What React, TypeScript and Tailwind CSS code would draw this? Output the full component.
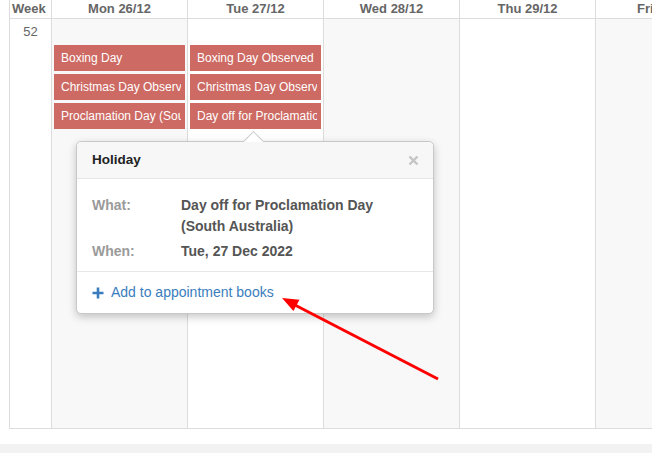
import React from 'react';

type Day = {
  label: string;
  shaded: boolean;
  events: string[];
};

const DAYS: Day[] = [
  {
    label: 'Mon 26/12',
    shaded: true,
    events: ['Boxing Day', 'Christmas Day Observed', 'Proclamation Day (South Australia)'],
  },
  {
    label: 'Tue 27/12',
    shaded: false,
    events: ['Boxing Day Observed (Day after)', 'Christmas Day Observed', 'Day off for Proclamation Day (South Australia)'],
  },
  { label: 'Wed 28/12', shaded: true, events: [] },
  { label: 'Thu 29/12', shaded: false, events: [] },
  { label: 'Fri 30/12', shaded: true, events: [] },
];

function HolidayPopover() {
  return (
    <div className="absolute left-[76px] top-[141px] w-[358px] rounded-[5px] border border-[#c8c8c8] bg-white shadow-[0_3px_9px_rgba(0,0,0,0.22)]">
      {/* arrow pointing at the event */}
      <div className="absolute left-[169px] top-[-8px] h-[15px] w-[15px] rotate-45 border-l border-t border-[#c8c8c8] bg-white" />

      <div className="relative z-10 flex h-[37px] items-center justify-between rounded-t-[5px] border-b border-[#e6e6e6] bg-[#f7f7f7] pl-[15px] pr-[14px]">
        <span className="mt-[1px] text-[13.5px] font-bold text-[#222]">Holiday</span>
        <svg width="11" height="11" viewBox="0 0 11 11" className="mt-[1px]">
          <path d="M1.5 1.5 L9.5 9.5 M9.5 1.5 L1.5 9.5" stroke="#c4c4c4" strokeWidth="2.4" strokeLinecap="butt" />
        </svg>
      </div>

      <div className="flex flex-col gap-[4px] border-b border-[#e8e8e8] pb-[9px] pl-[15px] pt-[16px] text-[14px] font-bold leading-[21px]">
        <div className="flex">
          <span className="w-[89px] shrink-0 text-[#9a9a9a]">What:</span>
          <span className="text-[#555]">
            Day off for Proclamation Day
            <br />
            (South Australia)
          </span>
        </div>
        <div className="flex">
          <span className="w-[89px] shrink-0 text-[#9a9a9a]">When:</span>
          <span className="text-[#555]">Tue, 27 Dec 2022</span>
        </div>
      </div>

      <div className="flex h-[41px] items-center gap-[7px] pl-[15px] text-[14px] text-[#3a7dbd]">
        <svg width="12" height="12" viewBox="0 0 12 12">
          <path d="M6 0.5 V11.5 M0.5 6 H11.5" stroke="#3a7dbd" strokeWidth="2.6" />
        </svg>
        <span>Add to appointment books</span>
      </div>
    </div>
  );
}

export default function App() {
  return (
    <div className="relative flex h-[453px] w-[652px] flex-col overflow-hidden bg-white font-['Liberation_Sans',Arial,sans-serif]">
      <div className="ml-[9px] w-max border-b border-l border-[#dcdcdc]">
        {/* header row */}
        <div className="flex h-[19px] text-[13px] font-bold leading-[17px] text-[#666]">
          <div className="w-[42px] border-b border-r border-[#dcdcdc] pl-[2px]">Week</div>
          {DAYS.map(day => (
            <div key={day.label} className="w-[136px] border-b border-r border-[#dcdcdc] text-center">
              {day.label}
            </div>
          ))}
        </div>

        {/* week 52 row */}
        <div className="flex h-[409px]">
          <div className="w-[42px] border-r border-[#dcdcdc] pt-[5px] text-center text-[13px] leading-[16px] text-[#666]">
            52
          </div>
          {DAYS.map(day => (
            <div
              key={day.label}
              className={`flex w-[136px] flex-col gap-[3px] border-r border-[#dcdcdc] pl-[2px] pr-[2px] pt-[26px] ${day.shaded ? 'bg-[#f8f8f8]' : 'bg-white'}`}
            >
              {day.events.map(ev => (
                <div key={ev} className="h-[26px] bg-[#cd6a63] pl-[7px] pr-[4px]">
                  <div className="overflow-hidden whitespace-nowrap text-[12px] leading-[26px] text-white">{ev}</div>
                </div>
              ))}
            </div>
          ))}
        </div>
      </div>

      <div className="mt-[15px] flex-1 bg-[#f2f2f2]" />

      <HolidayPopover />

      {/* red annotation arrow */}
      <svg className="pointer-events-none absolute left-0 top-0" width="652" height="453">
        <line x1="438" y1="379" x2="293" y2="304" stroke="#ff0000" strokeWidth="3" />
        <polygon points="282,298 293.4,311 299.5,299.8" fill="#ff0000" />
      </svg>
    </div>
  );
}
